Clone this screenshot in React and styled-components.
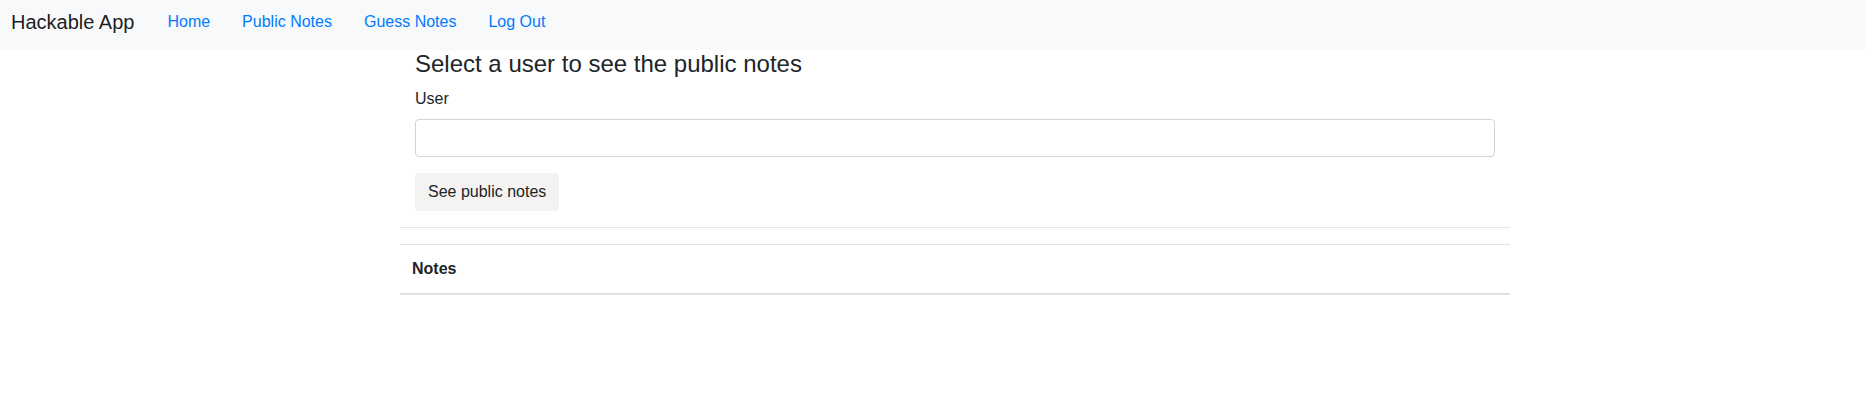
import React from "react";
import styled, { createGlobalStyle } from "styled-components";

const GlobalStyle = createGlobalStyle`
  * { box-sizing: border-box; }
  body {
    margin: 0;
    font-family: "Liberation Sans", Arial, sans-serif;
    font-size: 16px;
    line-height: 1.5;
    color: #212529;
    background: #fff;
  }
`;

const Navbar = styled.nav`
  display: flex;
  align-items: center;
  height: 50px;
  padding: 0 11px 6px;
  background: #f8f9fa;
`;

const Brand = styled.a`
  margin-right: 33px;
  font-size: 20px;
  line-height: 30px;
  color: rgba(0, 0, 0, 0.9);
  text-decoration: none;
`;

const NavLinks = styled.div`
  display: flex;
  gap: 32px;
`;

const NavLink = styled.a`
  font-size: 16px;
  line-height: 24px;
  color: #007bff;
  text-decoration: none;
`;

const Page = styled.div`
  padding-left: 44px;
`;

const Container = styled.main`
  width: 1110px;
  margin: 0 auto;
`;

const FormArea = styled.div`
  padding: 0 15px;
`;

const Heading = styled.h4`
  margin: 0 0 8px;
  font-size: 24px;
  font-weight: 500;
  line-height: 1.2;
`;

const Group = styled.div`
  margin-bottom: 16px;
`;

const Label = styled.label`
  display: block;
  margin-bottom: 8px;
`;

const Input = styled.input`
  display: block;
  width: 100%;
  height: 38px;
  padding: 6px 12px;
  font: inherit;
  color: #495057;
  border: 1px solid #ced4da;
  border-radius: 4px;
  background: #fff;
`;

const Button = styled.button`
  height: 38px;
  padding: 6px 12px;
  font: inherit;
  color: #212529;
  background: #f4f3f1;
  border: 1px solid transparent;
  border-radius: 4px;
`;

const Rule = styled.hr`
  margin: 16px 0;
  border: 0;
  border-top: 1px solid rgba(0, 0, 0, 0.1);
`;

const Table = styled.table`
  width: 100%;
  border-collapse: collapse;
`;

const Th = styled.th`
  padding: 12px;
  text-align: left;
  font-weight: 700;
  border-top: 1px solid #dee2e6;
  border-bottom: 2px solid #dee2e6;
`;

export default function App() {
  return (
    <>
      <GlobalStyle />
      <Navbar>
        <Brand href="#">Hackable App</Brand>
        <NavLinks>
          <NavLink href="#">Home</NavLink>
          <NavLink href="#">Public Notes</NavLink>
          <NavLink href="#">Guess Notes</NavLink>
          <NavLink href="#">Log Out</NavLink>
        </NavLinks>
      </Navbar>
      <Page>
        <Container>
          <FormArea>
            <Heading>Select a user to see the public notes</Heading>
            <Group>
              <Label htmlFor="user">User</Label>
              <Input id="user" type="text" />
            </Group>
            <Button type="button">See public notes</Button>
          </FormArea>
          <Rule />
          <Table>
            <thead>
              <tr>
                <Th>Notes</Th>
              </tr>
            </thead>
          </Table>
        </Container>
      </Page>
    </>
  );
}
